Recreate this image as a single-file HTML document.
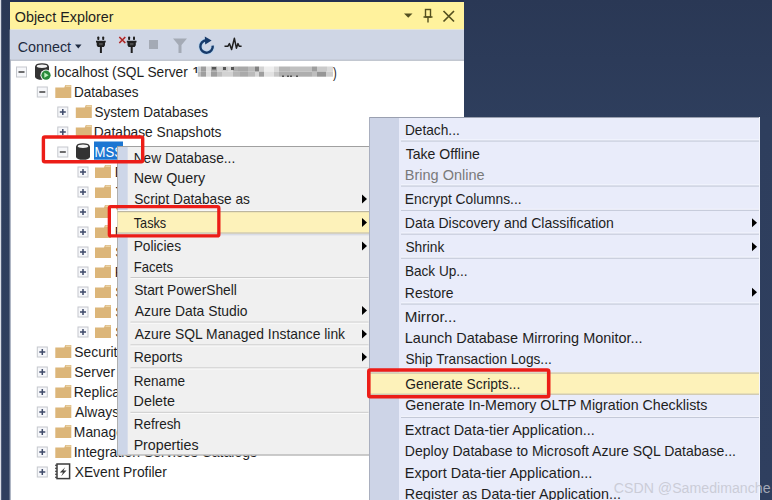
<!DOCTYPE html><html><head><meta charset="utf-8"><style>html,body{margin:0;padding:0;background:#2d3c5b;}svg{display:block;}</style></head><body><svg width="772" height="500" viewBox="0 0 772 500" font-family="Liberation Sans, sans-serif">
<defs><linearGradient id="nv" x1="0" y1="0" x2="0" y2="500" gradientUnits="userSpaceOnUse"><stop offset="0" stop-color="#2a3855"/><stop offset="0.24" stop-color="#2e3e5d"/><stop offset="1" stop-color="#2f3f5f"/></linearGradient></defs>
<rect x="0" y="0" width="772" height="500" fill="url(#nv)"/>
<rect x="0" y="0" width="1.2" height="500" fill="#d9dde6"/>
<rect x="10" y="2" width="454" height="498" fill="#ffffff"/>
<rect x="9.5" y="29.5" width="1.2" height="470.5" fill="#8d98ab"/>
<rect x="10" y="0" width="454" height="2" fill="#243152"/>
<rect x="10" y="2" width="454" height="27.5" fill="#fff29d"/>
<rect x="10" y="29.5" width="454" height="30.2" fill="#cfd6e5"/>
<rect x="10" y="59.6" width="454" height="1.1" fill="#a9b0bd"/>
<text x="14.82" y="22.00" font-size="15" fill="#1e1e1e" stroke="#1e1e1e" stroke-width="0.0" textLength="98.72" lengthAdjust="spacingAndGlyphs">Object Explorer</text>
<path d="M404 13.5 L412.5 13.5 L408.25 17.8 Z" fill="#545020"/>
<g fill="none" stroke="#545020" stroke-width="1.4"><rect x="425.5" y="9.5" width="5" height="7.5"/><path d="M423.5 17 H432.5 M428 17 V22.5"/></g>
<path d="M443.5 11 L454 21.5 M454 11 L443.5 21.5" stroke="#545020" stroke-width="1.7"/>
<text x="17.77" y="51.50" font-size="15" fill="#1e2a40" stroke="#1e2a40" stroke-width="0.0" textLength="53.33" lengthAdjust="spacingAndGlyphs">Connect</text>
<path d="M75 44.5 H81.5 L78.25 48.5 Z" fill="#1e2a40"/>
<g fill="#1f1f1f"><rect x="97.3" y="36.4" width="2" height="3.6" rx="0.8"/><rect x="102.2" y="36.4" width="2" height="3.6" rx="0.8"/><path d="M96 40.8 H105.7 V42.4 H105 V45.2 L103.9 46.9 H97.8 L96.7 45.2 V42.4 H96 Z"/><rect x="99.9" y="46.5" width="2" height="6.5"/></g><rect x="99" y="43" width="3.7" height="2.2" fill="#4a4a4a"/>
<g fill="#1f1f1f"><rect x="128.1" y="36.4" width="2" height="3.6" rx="0.8"/><rect x="133.0" y="36.4" width="2" height="3.6" rx="0.8"/><path d="M126.8 40.8 H136.5 V42.4 H135.8 V45.2 L134.7 46.9 H128.6 L127.5 45.2 V42.4 H126.8 Z"/><rect x="130.7" y="46.5" width="2" height="6.5"/></g><rect x="129.8" y="43" width="3.7" height="2.2" fill="#4a4a4a"/>
<path d="M119.3 37 L125.3 43 M125.3 37 L119.3 43" stroke="#f0b0b0" stroke-width="2.6" opacity="0.5"/>
<path d="M119.3 37 L125.3 43 M125.3 37 L119.3 43" stroke="#a82424" stroke-width="1.4"/>
<rect x="149" y="40" width="9" height="9" fill="#a4aab5"/>
<path d="M173 38.5 H187 L181.5 45 V53 H178.5 V45 Z" fill="#a4aab5"/>
<path d="M206.3 40.3 A6.2 6.2 0 1 0 212.7 45.6" fill="none" stroke="#a9d3f5" stroke-width="4.2" opacity="0.6"/>
<path d="M206.3 40.3 A6.2 6.2 0 1 0 212.7 45.6" fill="none" stroke="#173a6a" stroke-width="2.4"/>
<path d="M204.8 36.6 L211.6 40.6 L205.2 44.4 Z" fill="#173a6a"/>
<path d="M224.5 46.2 H228 L229.4 43.6 L231.6 49.5 L234.4 38.3 L236.4 48.2 L238 43.6 L239.2 46.2 H241.6" fill="none" stroke="#1f1f1f" stroke-width="1.5" stroke-linejoin="round"/>
<rect x="16.5" y="67.0" width="10" height="10" fill="#f6f7fa" stroke="#c5c8ce" stroke-width="1"/>
<rect x="18.5" y="71.25" width="6" height="1.5" fill="#404040"/>
<path d="M35 66.2 V76.8 A7 3 0 0 0 49 76.8 V66.2 Z" fill="#333333"/>
<ellipse cx="42" cy="66.3" rx="6" ry="2.4" fill="#f4f4f4" stroke="#333333" stroke-width="1.4"/>
<circle cx="46" cy="75.2" r="5.6" fill="#ffffff"/><circle cx="46" cy="75.2" r="4.6" fill="#2a8a3a"/><path d="M44.3 72.6 L48.6 75.2 L44.3 77.8 Z" fill="#bff0c0"/>
<text x="54.08" y="77.00" font-size="14.5" fill="#1e1e1e" stroke="#1e1e1e" stroke-width="0.0" textLength="133.75" lengthAdjust="spacingAndGlyphs">localhost (SQL Server</text>
<rect x="37.3" y="87.0" width="10" height="10" fill="#f6f7fa" stroke="#c5c8ce" stroke-width="1"/>
<rect x="39.3" y="91.25" width="6" height="1.5" fill="#404040"/>
<path d="M55.3 87.5 H64.3 L65.3 85 H71.3 V98 H55.3 Z" fill="#dcb67a"/>
<rect x="65.8" y="85.6" width="5" height="1.2" fill="#f1dcb4"/>
<text x="73.89" y="97.00" font-size="14.5" fill="#1e1e1e" stroke="#1e1e1e" stroke-width="0.0" textLength="64.60" lengthAdjust="spacingAndGlyphs">Databases</text>
<rect x="57.8" y="107.0" width="10" height="10" fill="#f6f7fa" stroke="#c5c8ce" stroke-width="1"/>
<rect x="59.8" y="111.25" width="6" height="1.5" fill="#3e4a69"/><rect x="62.05" y="109.0" width="1.5" height="6" fill="#3e4a69"/>
<path d="M75.8 107.5 H84.8 L85.8 105 H91.8 V118 H75.8 Z" fill="#dcb67a"/>
<rect x="86.3" y="105.6" width="5" height="1.2" fill="#f1dcb4"/>
<text x="94.38" y="117.00" font-size="14.5" fill="#1e1e1e" stroke="#1e1e1e" stroke-width="0.0" textLength="113.70" lengthAdjust="spacingAndGlyphs">System Databases</text>
<rect x="57.8" y="127.0" width="10" height="10" fill="#f6f7fa" stroke="#c5c8ce" stroke-width="1"/>
<rect x="59.8" y="131.25" width="6" height="1.5" fill="#3e4a69"/><rect x="62.05" y="129.0" width="1.5" height="6" fill="#3e4a69"/>
<path d="M75.8 127.5 H84.8 L85.8 125 H91.8 V138 H75.8 Z" fill="#dcb67a"/>
<rect x="86.3" y="125.6" width="5" height="1.2" fill="#f1dcb4"/>
<text x="93.87" y="137.00" font-size="14.5" fill="#1e1e1e" stroke="#1e1e1e" stroke-width="0.0" textLength="127.62" lengthAdjust="spacingAndGlyphs">Database Snapshots</text>
<rect x="57.8" y="147.0" width="10" height="10" fill="#f6f7fa" stroke="#c5c8ce" stroke-width="1"/>
<rect x="59.8" y="151.25" width="6" height="1.5" fill="#404040"/>
<path d="M76 146.2 V156.8 A7 3 0 0 0 90 156.8 V146.2 Z" fill="#333333"/>
<ellipse cx="83" cy="146.3" rx="6" ry="2.4" fill="#f4f4f4" stroke="#333333" stroke-width="1.4"/>
<rect x="94" y="141.5" width="29" height="18.2" fill="#1c76d2"/>
<text x="94.53" y="157.00" font-size="14.5" fill="#ffffff" stroke="#ffffff" stroke-width="0.0" textLength="28.38" lengthAdjust="spacingAndGlyphs">MSS</text>
<rect x="78.0" y="167.0" width="10" height="10" fill="#f6f7fa" stroke="#c5c8ce" stroke-width="1"/>
<rect x="80.0" y="171.25" width="6" height="1.5" fill="#3e4a69"/><rect x="82.25" y="169.0" width="1.5" height="6" fill="#3e4a69"/>
<path d="M95 167.5 H104 L105 165 H111 V178 H95 Z" fill="#dcb67a"/>
<rect x="105.5" y="165.6" width="5" height="1.2" fill="#f1dcb4"/>
<text x="114.86" y="177.00" font-size="14.5" fill="#1e1e1e" stroke="#1e1e1e" stroke-width="0.0" textLength="122.38" lengthAdjust="spacingAndGlyphs">Database Diagrams</text>
<rect x="78.0" y="187.0" width="10" height="10" fill="#f6f7fa" stroke="#c5c8ce" stroke-width="1"/>
<rect x="80.0" y="191.25" width="6" height="1.5" fill="#3e4a69"/><rect x="82.25" y="189.0" width="1.5" height="6" fill="#3e4a69"/>
<path d="M95 187.5 H104 L105 185 H111 V198 H95 Z" fill="#dcb67a"/>
<rect x="105.5" y="185.6" width="5" height="1.2" fill="#f1dcb4"/>
<text x="115.69" y="197.00" font-size="14.5" fill="#1e1e1e" stroke="#1e1e1e" stroke-width="0.0" textLength="41.56" lengthAdjust="spacingAndGlyphs">Tables</text>
<rect x="78.0" y="207.0" width="10" height="10" fill="#f6f7fa" stroke="#c5c8ce" stroke-width="1"/>
<rect x="80.0" y="211.25" width="6" height="1.5" fill="#3e4a69"/><rect x="82.25" y="209.0" width="1.5" height="6" fill="#3e4a69"/>
<path d="M95 207.5 H104 L105 205 H111 V218 H95 Z" fill="#dcb67a"/>
<rect x="105.5" y="205.6" width="5" height="1.2" fill="#f1dcb4"/>
<text x="115.94" y="217.00" font-size="14.5" fill="#1e1e1e" stroke="#1e1e1e" stroke-width="0.0" textLength="36.94" lengthAdjust="spacingAndGlyphs">Views</text>
<rect x="78.0" y="227.0" width="10" height="10" fill="#f6f7fa" stroke="#c5c8ce" stroke-width="1"/>
<rect x="80.0" y="231.25" width="6" height="1.5" fill="#3e4a69"/><rect x="82.25" y="229.0" width="1.5" height="6" fill="#3e4a69"/>
<path d="M95 227.5 H104 L105 225 H111 V238 H95 Z" fill="#dcb67a"/>
<rect x="105.5" y="225.6" width="5" height="1.2" fill="#f1dcb4"/>
<text x="114.86" y="237.00" font-size="14.5" fill="#1e1e1e" stroke="#1e1e1e" stroke-width="0.0" textLength="120.83" lengthAdjust="spacingAndGlyphs">External Resources</text>
<rect x="78.0" y="247.0" width="10" height="10" fill="#f6f7fa" stroke="#c5c8ce" stroke-width="1"/>
<rect x="80.0" y="251.25" width="6" height="1.5" fill="#3e4a69"/><rect x="82.25" y="249.0" width="1.5" height="6" fill="#3e4a69"/>
<path d="M95 247.5 H104 L105 245 H111 V258 H95 Z" fill="#dcb67a"/>
<rect x="105.5" y="245.6" width="5" height="1.2" fill="#f1dcb4"/>
<text x="115.37" y="257.00" font-size="14.5" fill="#1e1e1e" stroke="#1e1e1e" stroke-width="0.0" textLength="64.65" lengthAdjust="spacingAndGlyphs">Synonyms</text>
<rect x="78.0" y="267.0" width="10" height="10" fill="#f6f7fa" stroke="#c5c8ce" stroke-width="1"/>
<rect x="80.0" y="271.25" width="6" height="1.5" fill="#3e4a69"/><rect x="82.25" y="269.0" width="1.5" height="6" fill="#3e4a69"/>
<path d="M95 267.5 H104 L105 265 H111 V278 H95 Z" fill="#dcb67a"/>
<rect x="105.5" y="265.6" width="5" height="1.2" fill="#f1dcb4"/>
<text x="114.86" y="277.00" font-size="14.5" fill="#1e1e1e" stroke="#1e1e1e" stroke-width="0.0" textLength="100.04" lengthAdjust="spacingAndGlyphs">Programmability</text>
<rect x="78.0" y="287.0" width="10" height="10" fill="#f6f7fa" stroke="#c5c8ce" stroke-width="1"/>
<rect x="80.0" y="291.25" width="6" height="1.5" fill="#3e4a69"/><rect x="82.25" y="289.0" width="1.5" height="6" fill="#3e4a69"/>
<path d="M95 287.5 H104 L105 285 H111 V298 H95 Z" fill="#dcb67a"/>
<rect x="105.5" y="285.6" width="5" height="1.2" fill="#f1dcb4"/>
<text x="115.37" y="297.00" font-size="14.5" fill="#1e1e1e" stroke="#1e1e1e" stroke-width="0.0" textLength="90.81" lengthAdjust="spacingAndGlyphs">Service Broker</text>
<rect x="78.0" y="307.0" width="10" height="10" fill="#f6f7fa" stroke="#c5c8ce" stroke-width="1"/>
<rect x="80.0" y="311.25" width="6" height="1.5" fill="#3e4a69"/><rect x="82.25" y="309.0" width="1.5" height="6" fill="#3e4a69"/>
<path d="M95 307.5 H104 L105 305 H111 V318 H95 Z" fill="#dcb67a"/>
<rect x="105.5" y="305.6" width="5" height="1.2" fill="#f1dcb4"/>
<text x="115.37" y="317.00" font-size="14.5" fill="#1e1e1e" stroke="#1e1e1e" stroke-width="0.0" textLength="48.50" lengthAdjust="spacingAndGlyphs">Storage</text>
<rect x="78.0" y="327.0" width="10" height="10" fill="#f6f7fa" stroke="#c5c8ce" stroke-width="1"/>
<rect x="80.0" y="331.25" width="6" height="1.5" fill="#3e4a69"/><rect x="82.25" y="329.0" width="1.5" height="6" fill="#3e4a69"/>
<path d="M95 327.5 H104 L105 325 H111 V338 H95 Z" fill="#dcb67a"/>
<rect x="105.5" y="325.6" width="5" height="1.2" fill="#f1dcb4"/>
<text x="115.37" y="337.00" font-size="14.5" fill="#1e1e1e" stroke="#1e1e1e" stroke-width="0.0" textLength="50.02" lengthAdjust="spacingAndGlyphs">Security</text>
<rect x="37.3" y="347.0" width="10" height="10" fill="#f6f7fa" stroke="#c5c8ce" stroke-width="1"/>
<rect x="39.3" y="351.25" width="6" height="1.5" fill="#3e4a69"/><rect x="41.55" y="349.0" width="1.5" height="6" fill="#3e4a69"/>
<path d="M55.3 347.5 H64.3 L65.3 345 H71.3 V358 H55.3 Z" fill="#dcb67a"/>
<rect x="65.8" y="345.6" width="5" height="1.2" fill="#f1dcb4"/>
<text x="74.37" y="357.00" font-size="14.5" fill="#1e1e1e" stroke="#1e1e1e" stroke-width="0.0" textLength="50.02" lengthAdjust="spacingAndGlyphs">Security</text>
<rect x="37.3" y="367.0" width="10" height="10" fill="#f6f7fa" stroke="#c5c8ce" stroke-width="1"/>
<rect x="39.3" y="371.25" width="6" height="1.5" fill="#3e4a69"/><rect x="41.55" y="369.0" width="1.5" height="6" fill="#3e4a69"/>
<path d="M55.3 367.5 H64.3 L65.3 365 H71.3 V378 H55.3 Z" fill="#dcb67a"/>
<rect x="65.8" y="365.6" width="5" height="1.2" fill="#f1dcb4"/>
<text x="74.37" y="377.00" font-size="14.5" fill="#1e1e1e" stroke="#1e1e1e" stroke-width="0.0" textLength="91.58" lengthAdjust="spacingAndGlyphs">Server Objects</text>
<rect x="37.3" y="387.0" width="10" height="10" fill="#f6f7fa" stroke="#c5c8ce" stroke-width="1"/>
<rect x="39.3" y="391.25" width="6" height="1.5" fill="#3e4a69"/><rect x="41.55" y="389.0" width="1.5" height="6" fill="#3e4a69"/>
<path d="M55.3 387.5 H64.3 L65.3 385 H71.3 V398 H55.3 Z" fill="#dcb67a"/>
<rect x="65.8" y="385.6" width="5" height="1.2" fill="#f1dcb4"/>
<text x="73.86" y="397.00" font-size="14.5" fill="#1e1e1e" stroke="#1e1e1e" stroke-width="0.0" textLength="68.51" lengthAdjust="spacingAndGlyphs">Replication</text>
<rect x="37.3" y="407.0" width="10" height="10" fill="#f6f7fa" stroke="#c5c8ce" stroke-width="1"/>
<rect x="39.3" y="411.25" width="6" height="1.5" fill="#3e4a69"/><rect x="41.55" y="409.0" width="1.5" height="6" fill="#3e4a69"/>
<path d="M55.3 407.5 H64.3 L65.3 405 H71.3 V418 H55.3 Z" fill="#dcb67a"/>
<rect x="65.8" y="405.6" width="5" height="1.2" fill="#f1dcb4"/>
<text x="74.97" y="417.00" font-size="14.5" fill="#1e1e1e" stroke="#1e1e1e" stroke-width="0.0" textLength="167.77" lengthAdjust="spacingAndGlyphs">Always On High Availability</text>
<rect x="37.3" y="427.0" width="10" height="10" fill="#f6f7fa" stroke="#c5c8ce" stroke-width="1"/>
<rect x="39.3" y="431.25" width="6" height="1.5" fill="#3e4a69"/><rect x="41.55" y="429.0" width="1.5" height="6" fill="#3e4a69"/>
<path d="M55.3 427.5 H64.3 L65.3 425 H71.3 V438 H55.3 Z" fill="#dcb67a"/>
<rect x="65.8" y="425.6" width="5" height="1.2" fill="#f1dcb4"/>
<text x="73.86" y="437.00" font-size="14.5" fill="#1e1e1e" stroke="#1e1e1e" stroke-width="0.0" textLength="80.83" lengthAdjust="spacingAndGlyphs">Management</text>
<rect x="37.3" y="447.0" width="10" height="10" fill="#f6f7fa" stroke="#c5c8ce" stroke-width="1"/>
<rect x="39.3" y="451.25" width="6" height="1.5" fill="#3e4a69"/><rect x="41.55" y="449.0" width="1.5" height="6" fill="#3e4a69"/>
<path d="M55.3 447.5 H64.3 L65.3 445 H71.3 V458 H55.3 Z" fill="#dcb67a"/>
<rect x="65.8" y="445.6" width="5" height="1.2" fill="#f1dcb4"/>
<text x="73.70" y="457.00" font-size="14.5" fill="#1e1e1e" stroke="#1e1e1e" stroke-width="0.0" textLength="183.40" lengthAdjust="spacingAndGlyphs">Integration Services Catalogs</text>
<rect x="37.3" y="467.0" width="10" height="10" fill="#f6f7fa" stroke="#c5c8ce" stroke-width="1"/>
<rect x="39.3" y="471.25" width="6" height="1.5" fill="#3e4a69"/><rect x="41.55" y="469.0" width="1.5" height="6" fill="#3e4a69"/>
<rect x="57" y="464" width="12.6" height="14.6" fill="#ffffff" stroke="#3c3c3c" stroke-width="1.5"/>
<rect x="55.2" y="464.6" width="1.6" height="1.5" fill="#3c3c3c"/>
<rect x="55.2" y="467.6" width="1.6" height="1.5" fill="#3c3c3c"/>
<rect x="55.2" y="470.6" width="1.6" height="1.5" fill="#3c3c3c"/>
<rect x="55.2" y="473.6" width="1.6" height="1.5" fill="#3c3c3c"/>
<rect x="55.2" y="476.6" width="1.6" height="1.5" fill="#3c3c3c"/>
<path d="M65.2 467.2 L59.8 472.6 H63 L61.2 476.2 L66.6 470.6 H63.4 Z" fill="#3c3c3c"/>
<text x="74.69" y="477.00" font-size="14.5" fill="#1e1e1e" stroke="#1e1e1e" stroke-width="0.0" textLength="92.14" lengthAdjust="spacingAndGlyphs">XEvent Profiler</text>
<defs><filter id="bl" x="-5%" y="-30%" width="110%" height="160%"><feGaussianBlur stdDeviation="0.55"/></filter></defs>
<g filter="url(#bl)">
<rect x="197.8" y="66.5" width="3.1999999999999886" height="5.2" fill="#cecece"/>
<rect x="201" y="66.5" width="5" height="5.2" fill="#9e9e9e"/>
<rect x="206" y="66.5" width="5" height="5.2" fill="#dedede"/>
<rect x="211" y="66.5" width="6" height="5.2" fill="#a6a6a6"/>
<rect x="217" y="66.5" width="5" height="5.2" fill="#d2d2d2"/>
<rect x="222" y="66.5" width="6" height="5.2" fill="#cacaca"/>
<rect x="228" y="66.5" width="5" height="5.2" fill="#d6d6d6"/>
<rect x="233" y="66.5" width="5" height="5.2" fill="#aeaeae"/>
<rect x="238" y="66.5" width="10" height="5.2" fill="#a8a8a8"/>
<rect x="248" y="66.5" width="7" height="5.2" fill="#bababa"/>
<rect x="255" y="66.5" width="4" height="5.2" fill="#828282"/>
<rect x="259" y="66.5" width="5" height="5.2" fill="#d2d2d2"/>
<rect x="264" y="66.5" width="10" height="5.2" fill="#eeeeee"/>
<rect x="274" y="66.5" width="5" height="5.2" fill="#dadada"/>
<rect x="279" y="66.5" width="11" height="5.2" fill="#b6b6b6"/>
<rect x="290" y="66.5" width="22" height="5.2" fill="#c0c0c0"/>
<rect x="312" y="66.5" width="5" height="5.2" fill="#9e9e9e"/>
<rect x="317" y="66.5" width="10" height="5.2" fill="#cacaca"/>
<rect x="327" y="66.5" width="6" height="5.2" fill="#dadada"/>
<rect x="197.8" y="71.7" width="3.1999999999999886" height="5" fill="#bebebe"/>
<rect x="201" y="71.7" width="5" height="5" fill="#9e9e9e"/>
<rect x="206" y="71.7" width="5" height="5" fill="#dedede"/>
<rect x="211" y="71.7" width="6" height="5" fill="#9e9e9e"/>
<rect x="217" y="71.7" width="5" height="5" fill="#bebebe"/>
<rect x="222" y="71.7" width="11" height="5" fill="#d2d2d2"/>
<rect x="233" y="71.7" width="7" height="5" fill="#b6b6b6"/>
<rect x="240" y="71.7" width="8" height="5" fill="#aaaaaa"/>
<rect x="248" y="71.7" width="7" height="5" fill="#bababa"/>
<rect x="255" y="71.7" width="4" height="5" fill="#d6d6d6"/>
<rect x="259" y="71.7" width="5" height="5" fill="#9e9e9e"/>
<rect x="264" y="71.7" width="10" height="5" fill="#e2e2e2"/>
<rect x="274" y="71.7" width="5" height="5" fill="#c6c6c6"/>
<rect x="279" y="71.7" width="33" height="5" fill="#aeaeae"/>
<rect x="312" y="71.7" width="5" height="5" fill="#bebebe"/>
<rect x="317" y="71.7" width="9" height="5" fill="#969696"/>
<rect x="326" y="71.7" width="7" height="5" fill="#cecece"/>
</g>
<g fill="#555555" filter="url(#bl)"><rect x="212" y="67" width="4" height="2.5"/><rect x="223" y="67" width="3" height="3"/><rect x="231" y="67" width="3" height="3"/><rect x="282" y="75.5" width="2" height="1.5"/><rect x="287" y="75.5" width="2" height="1.5"/><rect x="290" y="75.5" width="2" height="1.5"/><rect x="296" y="75.5" width="2" height="1.5"/></g>
<clipPath id="c1"><rect x="190" y="60" width="10" height="13"/></clipPath>
<g clip-path="url(#c1)">
<text x="192.10" y="77.00" font-size="14.5" fill="#1e1e1e" stroke="#1e1e1e" stroke-width="0.0" textLength="8.06" lengthAdjust="spacingAndGlyphs">1</text>
</g>
<text x="332.93" y="77.50" font-size="14.5" fill="#1e1e1e" stroke="#1e1e1e" stroke-width="0.0" textLength="3.77" lengthAdjust="spacingAndGlyphs">)</text>
<rect x="117.2" y="146" width="252.3" height="309.5" fill="#f0f0f0"/>
<rect x="117.2" y="146" width="252.3" height="1" fill="#a0a0a0"/>
<rect x="117.2" y="454.5" width="252.3" height="1" fill="#a0a0a0"/>
<rect x="117.2" y="146" width="1" height="309.5" fill="#a0a0a0"/>
<rect x="118.2" y="147" width="9.5" height="307.5" fill="#cdd6e8"/>
<rect x="117.5" y="211" width="251.5" height="22.5" fill="#fdf2ba"/>
<rect x="117.5" y="233.4" width="251.5" height="2" fill="#d9dce6"/>
<rect x="117.5" y="210" width="251.5" height="1" fill="#f8f8f8"/>
<rect x="117.5" y="211" width="251.5" height="1.2" fill="#bdb7a0"/>
<rect x="117.5" y="232.4" width="251.5" height="1.2" fill="#c8c2ac"/>
<text x="133.67" y="162.60" font-size="14.5" fill="#1e1e1e" stroke="#1e1e1e" stroke-width="0.0" textLength="101.58" lengthAdjust="spacingAndGlyphs">New Database...</text>
<text x="133.63" y="183.00" font-size="14.5" fill="#1e1e1e" stroke="#1e1e1e" stroke-width="0.0" textLength="71.40" lengthAdjust="spacingAndGlyphs">New Query</text>
<text x="134.18" y="204.00" font-size="14.5" fill="#1e1e1e" stroke="#1e1e1e" stroke-width="0.0" textLength="115.72" lengthAdjust="spacingAndGlyphs">Script Database as</text>
<path d="M362 194.5 L367 199 L362 203.5 Z" fill="#000000"/>
<text x="133.73" y="227.50" font-size="14.5" fill="#1e1e1e" stroke="#1e1e1e" stroke-width="0.0" textLength="32.51" lengthAdjust="spacingAndGlyphs">Tasks</text>
<path d="M362 218.0 L367 222.5 L362 227.0 Z" fill="#000000"/>
<text x="133.67" y="251.00" font-size="14.5" fill="#1e1e1e" stroke="#1e1e1e" stroke-width="0.0" textLength="47.43" lengthAdjust="spacingAndGlyphs">Policies</text>
<path d="M362 241.5 L367 246 L362 250.5 Z" fill="#000000"/>
<text x="133.72" y="271.60" font-size="14.5" fill="#1e1e1e" stroke="#1e1e1e" stroke-width="0.0" textLength="39.35" lengthAdjust="spacingAndGlyphs">Facets</text>
<text x="134.17" y="294.60" font-size="14.5" fill="#1e1e1e" stroke="#1e1e1e" stroke-width="0.0" textLength="102.75" lengthAdjust="spacingAndGlyphs">Start PowerShell</text>
<text x="134.77" y="315.60" font-size="14.5" fill="#1e1e1e" stroke="#1e1e1e" stroke-width="0.0" textLength="112.81" lengthAdjust="spacingAndGlyphs">Azure Data Studio</text>
<path d="M362 306.1 L367 310.6 L362 315.1 Z" fill="#000000"/>
<text x="134.77" y="339.00" font-size="14.5" fill="#1e1e1e" stroke="#1e1e1e" stroke-width="0.0" textLength="210.31" lengthAdjust="spacingAndGlyphs">Azure SQL Managed Instance link</text>
<path d="M362 329.5 L367 334 L362 338.5 Z" fill="#000000"/>
<text x="133.66" y="362.00" font-size="14.5" fill="#1e1e1e" stroke="#1e1e1e" stroke-width="0.0" textLength="48.85" lengthAdjust="spacingAndGlyphs">Reports</text>
<path d="M362 352.5 L367 357 L362 361.5 Z" fill="#000000"/>
<text x="133.69" y="385.60" font-size="14.5" fill="#1e1e1e" stroke="#1e1e1e" stroke-width="0.0" textLength="51.32" lengthAdjust="spacingAndGlyphs">Rename</text>
<text x="133.62" y="406.00" font-size="14.5" fill="#1e1e1e" stroke="#1e1e1e" stroke-width="0.0" textLength="41.41" lengthAdjust="spacingAndGlyphs">Delete</text>
<text x="133.69" y="429.00" font-size="14.5" fill="#1e1e1e" stroke="#1e1e1e" stroke-width="0.0" textLength="47.18" lengthAdjust="spacingAndGlyphs">Refresh</text>
<text x="133.63" y="450.00" font-size="14.5" fill="#1e1e1e" stroke="#1e1e1e" stroke-width="0.0" textLength="64.88" lengthAdjust="spacingAndGlyphs">Properties</text>
<rect x="130.5" y="277.0" width="238" height="1.1" fill="#cacaca"/>
<rect x="130.5" y="278.1" width="238" height="1" fill="#fbfbfb"/>
<rect x="130.5" y="321.59999999999997" width="238" height="1.1" fill="#cacaca"/>
<rect x="130.5" y="322.7" width="238" height="1" fill="#fbfbfb"/>
<rect x="130.5" y="344.4" width="238" height="1.1" fill="#cacaca"/>
<rect x="130.5" y="345.5" width="238" height="1" fill="#fbfbfb"/>
<rect x="130.5" y="367.4" width="238" height="1.1" fill="#cacaca"/>
<rect x="130.5" y="368.5" width="238" height="1" fill="#fbfbfb"/>
<rect x="130.5" y="411.79999999999995" width="238" height="1.1" fill="#cacaca"/>
<rect x="130.5" y="412.9" width="238" height="1" fill="#fbfbfb"/>
<rect x="369" y="117" width="391" height="383" fill="#e9ecfa"/>
<rect x="369" y="117" width="391" height="1" fill="#9aa0b0"/>
<rect x="369" y="117" width="1" height="383" fill="#a9afbf"/>
<rect x="759" y="117" width="1" height="383" fill="#f5f6fc"/>
<rect x="370" y="118" width="29" height="382" fill="#cdd4e7"/>
<rect x="370" y="372.5" width="389" height="22" fill="#fdf2ba"/>
<rect x="370" y="372.5" width="389" height="1.2" fill="#c9c3ad"/>
<rect x="370" y="393.6" width="389" height="1.2" fill="#c9c3ad"/>
<text x="404.88" y="134.50" font-size="14.5" fill="#1e1e1e" stroke="#1e1e1e" stroke-width="0.0" textLength="54.88" lengthAdjust="spacingAndGlyphs">Detach...</text>
<text x="405.69" y="158.50" font-size="14.5" fill="#1e1e1e" stroke="#1e1e1e" stroke-width="0.0" textLength="74.12" lengthAdjust="spacingAndGlyphs">Take Offline</text>
<text x="404.81" y="180.00" font-size="14.5" fill="#7a7a7a" stroke="#7a7a7a" stroke-width="0.0" textLength="79.83" lengthAdjust="spacingAndGlyphs">Bring Online</text>
<text x="404.87" y="204.00" font-size="14.5" fill="#1e1e1e" stroke="#1e1e1e" stroke-width="0.0" textLength="116.80" lengthAdjust="spacingAndGlyphs">Encrypt Columns...</text>
<text x="404.85" y="228.00" font-size="14.5" fill="#1e1e1e" stroke="#1e1e1e" stroke-width="0.0" textLength="209.06" lengthAdjust="spacingAndGlyphs">Data Discovery and Classification</text>
<path d="M752 218.2 L757 222.7 L752 227.2 Z" fill="#000000"/>
<text x="405.38" y="252.00" font-size="14.5" fill="#1e1e1e" stroke="#1e1e1e" stroke-width="0.0" textLength="39.00" lengthAdjust="spacingAndGlyphs">Shrink</text>
<path d="M752 242.2 L757 246.7 L752 251.2 Z" fill="#000000"/>
<text x="404.88" y="276.00" font-size="14.5" fill="#1e1e1e" stroke="#1e1e1e" stroke-width="0.0" textLength="62.76" lengthAdjust="spacingAndGlyphs">Back Up...</text>
<text x="404.86" y="297.60" font-size="14.5" fill="#1e1e1e" stroke="#1e1e1e" stroke-width="0.0" textLength="48.76" lengthAdjust="spacingAndGlyphs">Restore</text>
<path d="M752 287.8 L757 292.3 L752 296.8 Z" fill="#000000"/>
<text x="404.77" y="322.00" font-size="14.5" fill="#1e1e1e" stroke="#1e1e1e" stroke-width="0.0" textLength="51.60" lengthAdjust="spacingAndGlyphs">Mirror...</text>
<text x="404.82" y="343.00" font-size="14.5" fill="#1e1e1e" stroke="#1e1e1e" stroke-width="0.0" textLength="237.80" lengthAdjust="spacingAndGlyphs">Launch Database Mirroring Monitor...</text>
<text x="405.38" y="364.00" font-size="14.5" fill="#1e1e1e" stroke="#1e1e1e" stroke-width="0.0" textLength="146.36" lengthAdjust="spacingAndGlyphs">Ship Transaction Logs...</text>
<text x="405.31" y="389.00" font-size="14.5" fill="#1e1e1e" stroke="#1e1e1e" stroke-width="0.0" textLength="114.95" lengthAdjust="spacingAndGlyphs">Generate Scripts...</text>
<text x="405.29" y="410.00" font-size="14.5" fill="#1e1e1e" stroke="#1e1e1e" stroke-width="0.0" textLength="302.02" lengthAdjust="spacingAndGlyphs">Generate In-Memory OLTP Migration Checklists</text>
<text x="404.82" y="434.60" font-size="14.5" fill="#1e1e1e" stroke="#1e1e1e" stroke-width="0.0" textLength="189.99" lengthAdjust="spacingAndGlyphs">Extract Data-tier Application...</text>
<text x="404.85" y="456.00" font-size="14.5" fill="#1e1e1e" stroke="#1e1e1e" stroke-width="0.0" textLength="331.12" lengthAdjust="spacingAndGlyphs">Deploy Database to Microsoft Azure SQL Database...</text>
<text x="404.82" y="477.60" font-size="14.5" fill="#1e1e1e" stroke="#1e1e1e" stroke-width="0.0" textLength="187.50" lengthAdjust="spacingAndGlyphs">Export Data-tier Application...</text>
<text x="404.83" y="498.80" font-size="14.5" fill="#1e1e1e" stroke="#1e1e1e" stroke-width="0.0" textLength="216.07" lengthAdjust="spacingAndGlyphs">Register as Data-tier Application...</text>
<rect x="401" y="139.5" width="358" height="1" fill="#f8f9ff"/>
<rect x="401" y="140.5" width="358" height="1.1" fill="#c4c9d8"/>
<rect x="401" y="184.5" width="358" height="1" fill="#f8f9ff"/>
<rect x="401" y="185.5" width="358" height="1.1" fill="#c4c9d8"/>
<rect x="401" y="208.8" width="358" height="1" fill="#f8f9ff"/>
<rect x="401" y="209.8" width="358" height="1.1" fill="#c4c9d8"/>
<rect x="401" y="232.6" width="358" height="1" fill="#f8f9ff"/>
<rect x="401" y="233.6" width="358" height="1.1" fill="#c4c9d8"/>
<rect x="401" y="256.7" width="358" height="1" fill="#f8f9ff"/>
<rect x="401" y="257.7" width="358" height="1.1" fill="#c4c9d8"/>
<rect x="401" y="302.5" width="358" height="1" fill="#f8f9ff"/>
<rect x="401" y="303.5" width="358" height="1.1" fill="#c4c9d8"/>
<rect x="401" y="415.9" width="358" height="1" fill="#f8f9ff"/>
<rect x="401" y="416.9" width="358" height="1.1" fill="#c4c9d8"/>
<rect x="43.400000000000006" y="137.0" width="99.3" height="24.699999999999996" fill="none" stroke="#ec1d17" stroke-width="3.4" rx="1.5"/>
<rect x="109.35000000000001" y="206.65" width="109.5" height="29.299999999999994" fill="none" stroke="#ec1d17" stroke-width="3.3" rx="1.5"/>
<rect x="368.8" y="370.0" width="179.9" height="26.70000000000001" fill="none" stroke="#ec1d17" stroke-width="3.6" rx="1.5"/>
<text x="613.78" y="492.60" font-size="15.5" fill="rgba(195,196,206,0.8)" stroke="rgba(195,196,206,0.8)" stroke-width="0" textLength="156.75" lengthAdjust="spacingAndGlyphs">CSDN @Samedimanche</text>
</svg></body></html>
